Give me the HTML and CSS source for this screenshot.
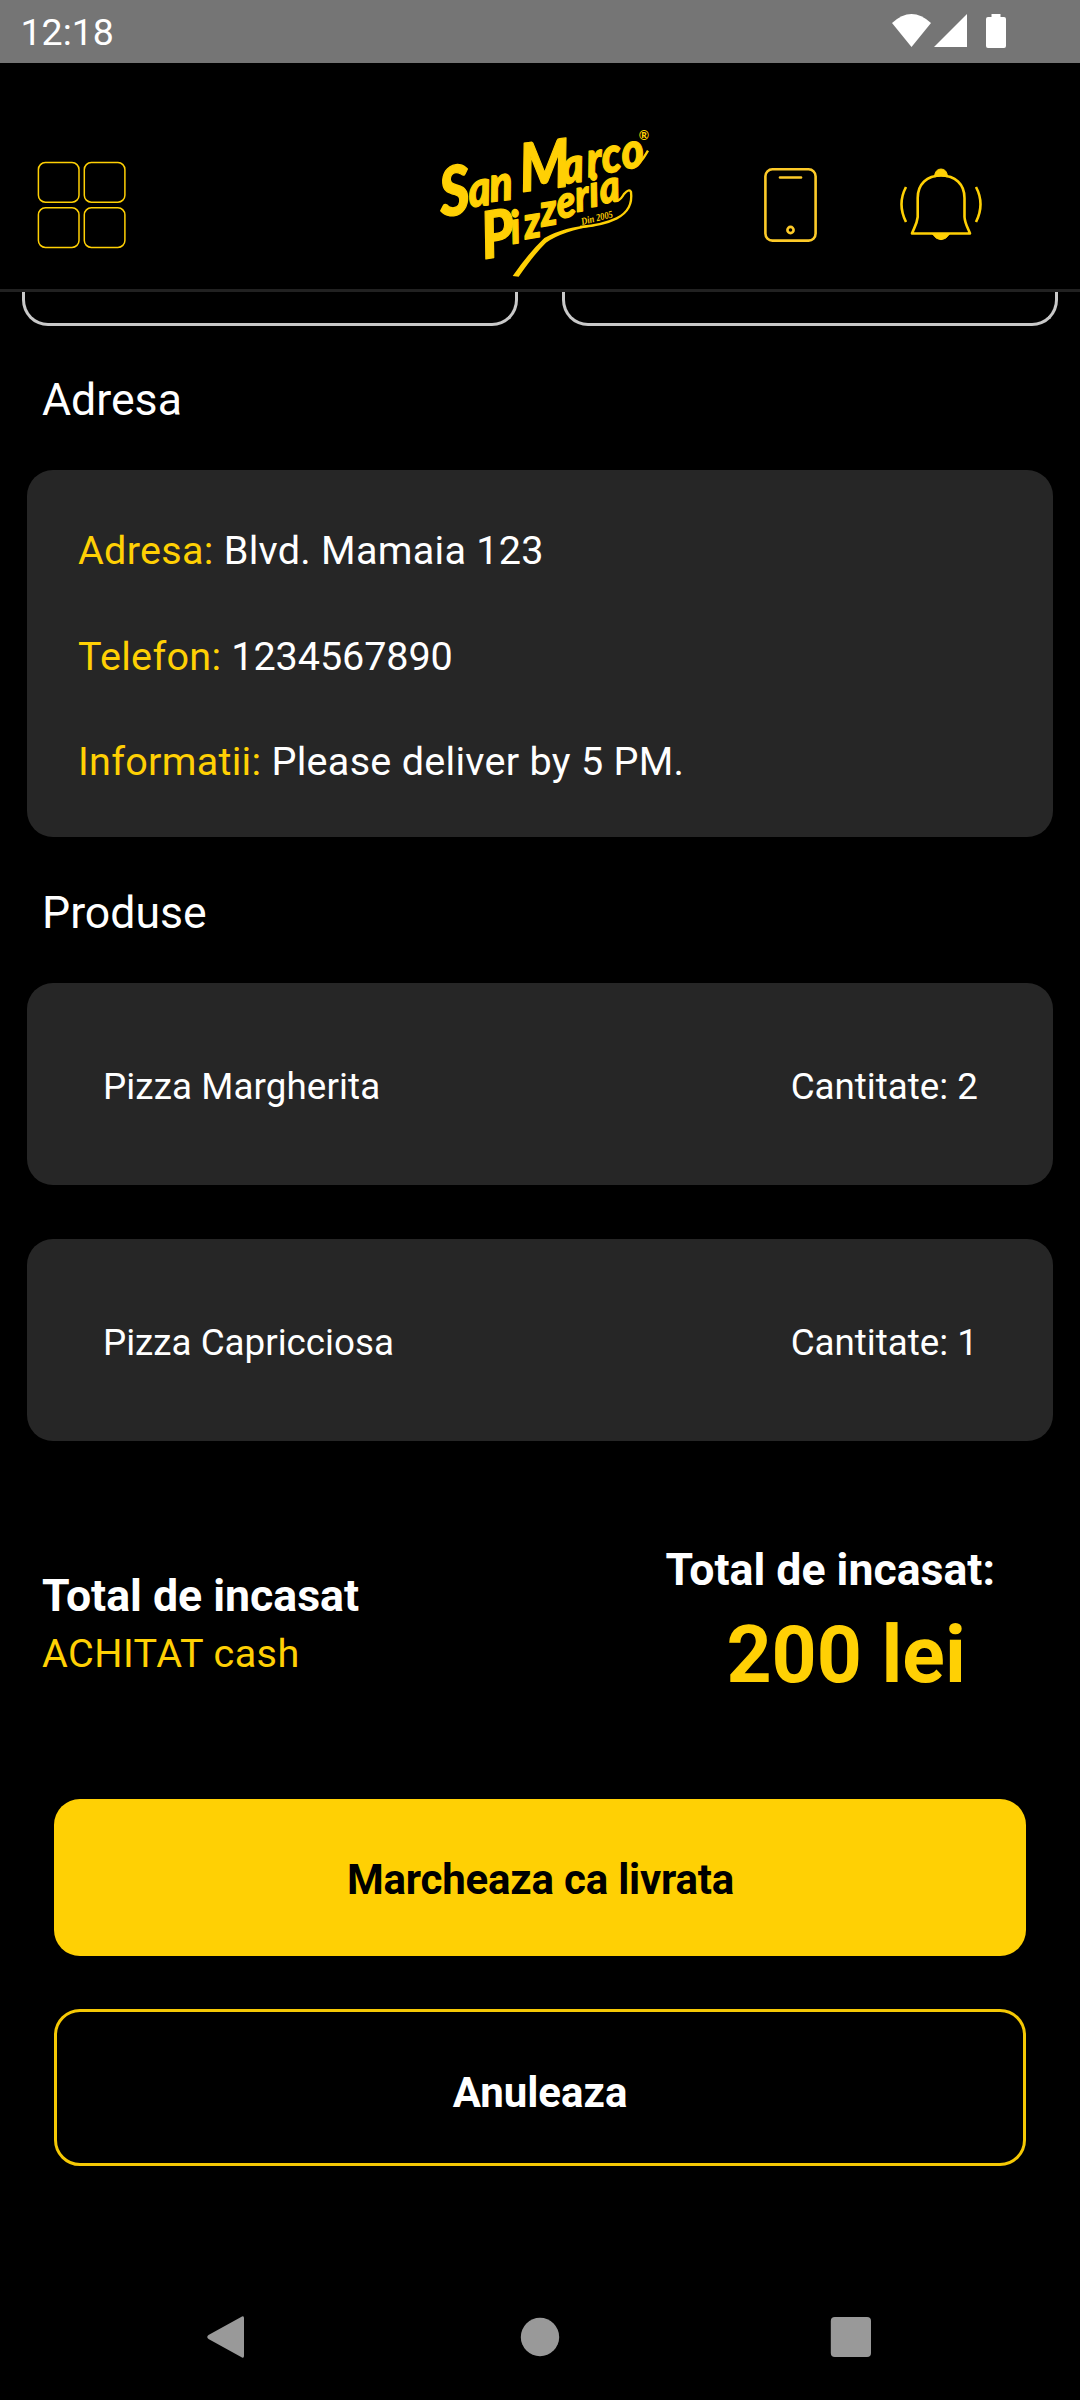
FILE: index.html
```html
<!DOCTYPE html>
<html lang="ro">
<head>
<meta charset="utf-8">
<title>San Marco Pizzeria</title>
<link rel="stylesheet" href="styles.css">
</head>
<body>
<div class="screen">
  <div class="status">
    <span class="clock">12:18</span>
    <svg class="status-icons" width="115" height="35" viewBox="892 14 115 35" fill="#fff">
      <path d="M892 23Q911.500 5 931 23L911.500 47Z"/>
      <path d="M934 47L967 14V47Z"/>
      <path d="M991.500 14h9v3h3.500q2 0 2 2v27q0 2-2 2h-16q-2 0-2-2v-27q0-2 2-2h3.500z"/>
    </svg>
  </div>
  <header class="header">
    <svg class="menu" width="90" height="88" viewBox="37 161 90 88" fill="none" stroke="#ffd004" stroke-width="1.500">
      <rect x="38.400" y="162.600" width="40.600" height="39.600" rx="7"/>
      <rect x="84.300" y="162.600" width="40.600" height="39.600" rx="7"/>
      <rect x="38.400" y="207.800" width="40.600" height="39.600" rx="7"/>
      <rect x="84.300" y="207.800" width="40.600" height="39.600" rx="7"/>
    </svg>
    <svg class="logo" width="250" height="178" viewBox="0 0 750 534" fill="#ffd004">
      <g class="script" transform="scale(.85 1)">
        <text rotate="-6" x="76 176 250" y="320 292 276"><tspan font-size="205">S</tspan>an</text>
        <text rotate="-6" x="358 504 593 646 716" y="246 222 202 190 178"><tspan font-size="200">M</tspan>arco</text>
        <text class="second" rotate="-8" x="226 326 372 430 488 553 603 640" y="448 402 388 350 326 306 292 282"><tspan font-size="195">P</tspan>izzeria</text>
      </g>
      <text class="since" transform="translate(486 345) rotate(-14)" textLength="97" lengthAdjust="spacingAndGlyphs">Din 2005</text>
      <text class="reg" x="656" y="90">®</text>
      <path d="M640 172Q658 168 684 122M588 262Q594 282 612 252Q628 234 633 246Q640 300 590 325Q550 345 480 351" fill="none" stroke="#ffd004" stroke-width="7"/>
      <path d="M525 344Q430 350 373 384Q325 430 278 498L296 500Q345 430 378 398Q430 362 525 348Z"/>
    </svg>
    <svg class="phone" width="54" height="75" viewBox="764 168 54 75" fill="none" stroke="#fdca28" stroke-width="2.600" stroke-linecap="round">
      <rect x="765.400" y="169.300" width="50.200" height="71.300" rx="7"/>
      <path d="M780 177.500h21"/>
      <circle cx="790.500" cy="230" r="3.100"/>
    </svg>
    <svg class="bell" width="84" height="74" viewBox="899 168 84 74" fill="none" stroke="#ffd004" stroke-width="2.600">
      <path d="M917.700 198C917.700 184 927 175.500 941 175.500S964.500 184 964.500 198V217C965 224 968 228 970 233.500H912C914 228 917 224 917.700 217Z" stroke-linejoin="round"/>
      <path d="M934.500 177Q935 169 941 169T947.500 177Q941 174.500 934.500 177ZM932.500 234H949.500Q946 239.700 941 239.700T932.500 234Z" fill="#ffd004" stroke-width="1"/>
      <path d="M906 187Q897 204 906 222M976 187Q985 204 976 222"/>
    </svg>
  </header>
  <main class="content">
    <div class="fields"><div class="field"></div><div class="field"></div></div>
    <h2 class="heading">Adresa</h2>
    <section class="card address">
      <p><b>Adresa:</b> Blvd. Mamaia 123</p>
      <p><b>Telefon:</b> <span class="number">1234567890</span></p>
      <p><b>Informatii:</b> Please deliver by 5 PM.</p>
    </section>
    <h2 class="heading products-heading">Produse</h2>
    <section class="products">
      <div class="card product"><span class="name">Pizza Margherita</span><span>Cantitate: 2</span></div>
      <div class="card product"><span>Pizza Capricciosa</span><span>Cantitate: 1</span></div>
    </section>
    <section class="totals">
      <div class="paid"><strong>Total de incasat</strong><span>ACHITAT cash</span></div>
      <div class="due"><strong>Total de incasat:</strong><span class="amount">200 lei</span></div>
    </section>
    <div class="actions">
      <button class="button primary">Marcheaza ca livrata</button>
      <button class="button outline">Anuleaza</button>
    </div>
  </main>
  <nav class="nav">
    <svg width="665" height="44" viewBox="207 2315 665 44" fill="#999">
      <path d="M242 2316.500L208.500 2335q-2.500 2 0 4L242 2357.500q2 .8 2-1.500V2318q0-2.300-2-1.500z"/>
      <circle cx="540" cy="2337" r="19.200"/>
      <rect x="830.800" y="2317" width="40.200" height="40" rx="4"/>
    </svg>
  </nav>
</div>
</body>
</html>
```
FILE: styles.css
```css
* { box-sizing: border-box; }
body { margin: 0; background: #000; }
.screen {
  width: 1080px;
  height: 2400px;
  display: flex;
  flex-direction: column;
  background: #000;
  color: #fff;
  font-family: Roboto, sans-serif;
  overflow: hidden;
}
.status {
  height: 63px;
  flex: none;
  display: flex;
  justify-content: space-between;
  align-items: flex-start;
  padding: 14px 73px 0 20.5px;
  background: #757575;
}
.clock { margin-top: -1px; font-size: 37.5px; line-height: 38px; }
.header {
  height: 229px;
  flex: none;
  display: flex;
  align-items: flex-start;
  padding: 47px 0 0 37px;
  border-bottom: 3px solid #212121;
}
.header svg { flex: none; }
.menu { margin-top: 51px; }
.logo { margin-left: 293px; }
.script {
  font: italic 900 150px Lato, sans-serif;
  stroke: #ffd004;
  stroke-width: 4px;
  stroke-linejoin: round;
}
.script .second { font-size: 136px; }
.since { font: italic 700 31px "Liberation Serif", serif; }
.reg { font: 700 38px Lato, sans-serif; }
.phone { margin: 58px 0 0 94px; }
.bell { margin: 58px 0 0 81px; }
.content { flex: 1; }
.fields { display: flex; gap: 44px; padding: 0 22px; }
.field {
  flex: 1;
  height: 34px;
  border: 3px solid #c8c8c8;
  border-top-width: 0;
  border-radius: 0 0 26px 26px;
}
.heading {
  margin: 48px 0 44px 42px;
  font-size: 44.625px;
  line-height: 52px;
  font-weight: 400;
}
.card { margin: 0 27px; border-radius: 26px; background: #262626; }
.address {
  height: 367px;
  padding: 58px 51px 0;
  display: flex;
  flex-direction: column;
  gap: 59.5px;
  font-size: 39.6px;
  line-height: 46px;
  letter-spacing: .27px;
}
.address p { margin: 0; }
.address b { font-weight: 400; color: #ffd004; }
.number { letter-spacing: -.1px; }
.products-heading { margin: 50px 0 44px 42px; }
.products { display: flex; flex-direction: column; gap: 54px; }
.product {
  height: 202px;
  padding: 5px 75px 0 76px;
  display: flex;
  justify-content: space-between;
  align-items: center;
  font-size: 36.75px;
}
.name { letter-spacing: .1px; }
.totals {
  height: 358px;
  padding: 103px 85px 0 42px;
  display: flex;
  justify-content: space-between;
}
.totals strong { font-size: 44.625px; line-height: 52px; font-weight: 700; }
.paid, .due { display: flex; flex-direction: column; }
.paid { padding-top: 26px; gap: 9px; }
.paid span { font-size: 39.6px; line-height: 46px; letter-spacing: .45px; color: #ffd004; }
.due { gap: 13px; }
.amount { padding-left: 61px; font-size: 78.75px; line-height: 92px; font-weight: 700; color: #ffd004; }
.actions { display: flex; flex-direction: column; gap: 53px; padding: 0 54px; }
.button {
  height: 157px;
  padding: 4px 0 0;
  border: 0;
  border-radius: 26px;
  font: 700 42px Roboto, sans-serif;
}
.primary { padding-left: 1px; background: #ffd004; color: #000; letter-spacing: -.2px; }
.outline { padding-top: 10px; border: 3px solid #f5c804; background: transparent; color: #fff; }
.nav { height: 126px; flex: none; display: flex; align-items: center; padding-left: 207px; }
```
